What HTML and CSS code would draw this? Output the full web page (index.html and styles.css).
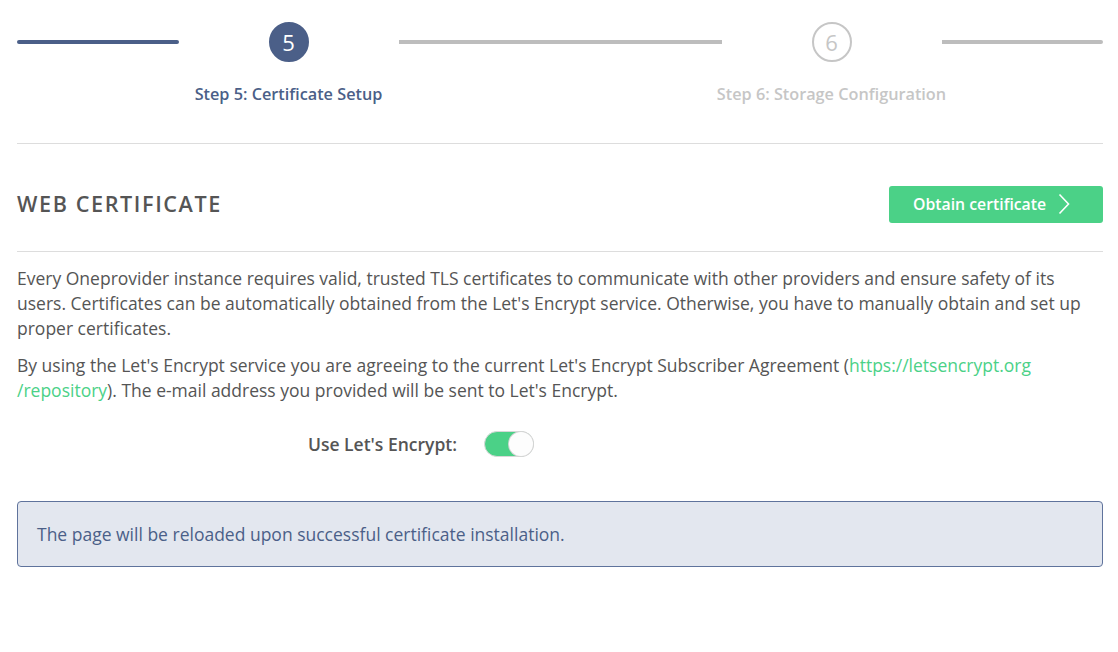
FILE: index.html
```html
<!DOCTYPE html>
<html>
<head>
<meta charset="utf-8">
<link rel="stylesheet" href="styles.css">
</head>
<body>
<div class="page">
  <div class="steps">
    <div class="step active">
      <div class="track">
        <span class="line done first"></span>
        <span class="circle">5</span>
        <span class="line"></span>
      </div>
      <div class="step-label">Step 5: Certificate Setup</div>
    </div>
    <div class="step">
      <div class="track">
        <span class="line"></span>
        <span class="circle">6</span>
        <span class="line last"></span>
      </div>
      <div class="step-label">Step 6: Storage Configuration</div>
    </div>
  </div>

  <div class="section-head">
    <h2 class="title">WEB CERTIFICATE</h2>
    <button class="btn-obtain">Obtain certificate
      <svg class="chev" width="12" height="22" viewBox="0 0 12 22"><path d="M1.5 1.5 L10.5 11 L1.5 20.5" fill="none" stroke="#fff" stroke-width="1.6"/></svg>
    </button>
  </div>

  <div class="body">
    <p>Every Oneprovider instance requires valid, trusted TLS certificates to communicate with other providers and ensure safety of its users. Certificates can be automatically obtained from the Let's Encrypt service. Otherwise, you have to manually obtain and set up proper certificates.</p>
    <p>By using the Let's Encrypt service you are agreeing to the current Let's Encrypt Subscriber Agreement (<a class="link" href="#">https://letsencrypt.org<br>/repository</a>). The e-mail address you provided will be sent to Let's Encrypt.</p>

    <div class="form-row">
      <label class="form-label">Use Let's Encrypt:</label>
      <span class="toggle"><span class="knob"></span></span>
    </div>

    <div class="alert">The page will be reloaded upon successful certificate installation.</div>
  </div>
</div>
</body>
</html>
```
FILE: styles.css
```css
* { box-sizing: border-box; }
html, body { margin: 0; padding: 0; background: #fff; }
body {
  font-family: "Open Sans", "Noto Sans", sans-serif;
  color: #555;
  font-size: 17.5px;
}
.page {
  padding: 0 15px 0 17px;
}
.steps {
  display: flex;
  padding-top: 22px;
  padding-bottom: 38px;
  border-bottom: 1px solid #ddd;
}
.step { flex: 1; display: flex; flex-direction: column; align-items: center; }
.track { display: flex; align-items: center; width: 100%; }
.line {
  flex: 1;
  height: 4px;
  background: #bdbdbd;
}
.line.first { border-radius: 2px 0 0 2px; }
.line.last { border-radius: 0 2px 2px 0; }
.line.done { background: #4b5f88; border-radius: 2px; }
.circle {
  width: 40px; height: 40px;
  border-radius: 50%;
  margin: 0 90px;
  display: flex; align-items: center; justify-content: center;
  font-size: 22px;
  color: #c6c6c6;
  border: 2px solid #c6c6c6;
  background: #fff;
}
.step.active .circle {
  background: #4b5f88;
  border-color: #4b5f88;
  color: #fff;
}
.step-label {
  margin-top: 21px;
  font-size: 16.25px;
  font-weight: 600;
  color: #c6c6c6;
  line-height: 22px;
}
.step.active .step-label { color: #4b5f88; }

.section-head {
  display: flex;
  align-items: center;
  justify-content: space-between;
  padding: 41px 0 28px;
  border-bottom: 1px solid #ddd;
}
.title {
  margin: 0;
  font-size: 21.6px;
  font-weight: 600;
  letter-spacing: 1.6px;
  color: #555;
  line-height: 38px;
}
.btn-obtain {
  font-family: inherit;
  background: #4bd187;
  border: none;
  border-radius: 3px;
  color: #fff;
  font-size: 15.8px;
  font-weight: 600;
  height: 37px;
  width: 214px;
  display: flex;
  align-items: center;
  justify-content: flex-start;
  gap: 12px;
  padding: 0 0 0 24px;
}
.chev { display: block; }

.body { padding-top: 14px; }
.body p {
  margin: 0 0 12px;
  line-height: 25px;
  font-size: 17.5px;
  color: #555;
}
.link { color: #4bd187; text-decoration: none; }

.form-row {
  display: flex;
  align-items: center;
  margin-top: 28px;
}
.form-label {
  width: 440px;
  text-align: right;
  font-weight: 600;
  font-size: 17.5px;
  color: #555;
}
.toggle {
  margin-left: 27px;
  width: 50px; height: 26px;
  border-radius: 13px;
  background: #4bd187;
  border: 1px solid #d8d8d8;
  position: relative;
  display: inline-block;
}
.knob {
  position: absolute;
  right: 0; top: 0;
  width: 24px; height: 24px;
  border-radius: 50%;
  background: #fdfdfd;
  box-shadow: 0 0 0 1px #d5d5d5;
}
.alert {
  margin-top: 44px;
  height: 66px;
  display: flex;
  align-items: center;
  padding: 0 19px;
  background: #e3e7ef;
  border: 1px solid #5f739c;
  border-radius: 4px;
  color: #4b5f88;
  font-size: 17.5px;
}
```
